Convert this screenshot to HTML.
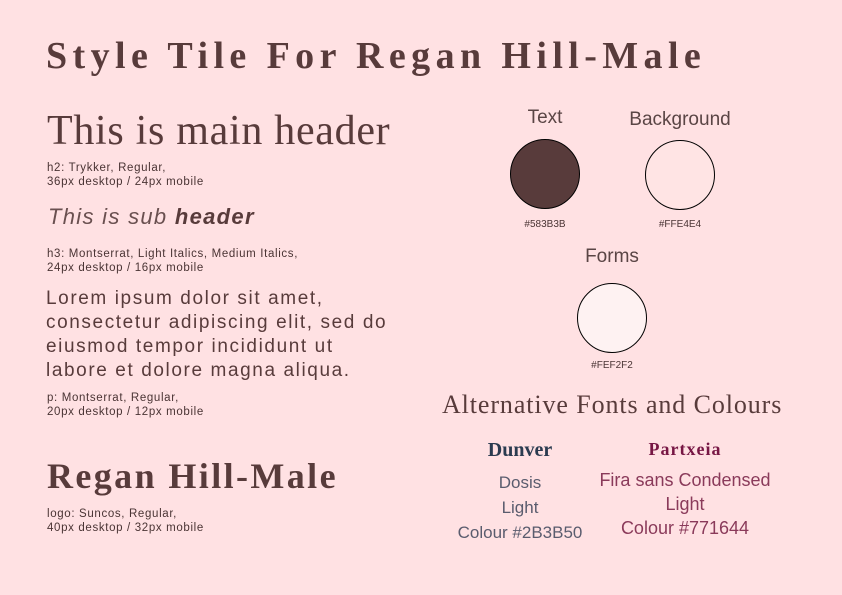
<!DOCTYPE html>
<html><head><meta charset="utf-8"><style>
body{margin:0;width:842px;height:595px;background:#ffe1e3;position:relative;overflow:hidden;font-family:"Liberation Sans",sans-serif;color:#583b3b}
.a{position:absolute;white-space:nowrap}
.s{font-size:11.5px;line-height:14px;color:#4a3434;letter-spacing:0.65px}
.c{position:absolute;width:68px;height:68px;border-radius:50%;border:1px solid #000}
.lab{font-size:19px;color:#5a4545;text-align:center}
.hex{font-size:10px;color:#4a3434;text-align:center}
</style></head><body>
<div class="a" style="left:46px;top:34px;font:bold 38px 'Liberation Serif',serif;letter-spacing:5.4px;color:#583b3b">Style Tile For Regan Hill-Male</div>
<div class="a" style="left:47px;top:107px;font:42px 'Liberation Serif',serif;letter-spacing:0.7px">This is main header</div>
<div class="a s" style="left:47px;top:161px">h2: Trykker, Regular,<br>36px desktop / 24px mobile</div>
<div class="a" style="left:48px;top:204px;font-size:22px;font-style:italic;color:#6a5050;letter-spacing:1.3px">This is sub <b style="color:#583b3b">header</b></div>
<div class="a s" style="left:47px;top:247px">h3: Montserrat, Light Italics, Medium Italics,<br>24px desktop / 16px mobile</div>
<div class="a" style="left:46px;top:287px;font-size:19px;line-height:24px;letter-spacing:1.6px">Lorem ipsum dolor sit amet,<br>consectetur adipiscing elit, sed do<br>eiusmod tempor incididunt ut<br>labore et dolore magna aliqua.</div>
<div class="a s" style="left:47px;top:391px">p: Montserrat, Regular,<br>20px desktop / 12px mobile</div>
<div class="a" style="left:47px;top:455px;font:bold 36px 'Liberation Serif',serif;letter-spacing:2.4px">Regan Hill-Male</div>
<div class="a s" style="left:47px;top:507px">logo: Suncos, Regular,<br>40px desktop / 32px mobile</div>

<div class="a lab" style="left:505px;top:107px;width:80px">Text</div>
<div class="a lab" style="left:610px;top:109px;width:140px">Background</div>
<div class="c" style="left:510px;top:139px;background:#583b3b"></div>
<div class="c" style="left:645px;top:140px;background:#ffe4e4"></div>
<div class="a hex" style="left:505px;top:219px;width:80px">#583B3B</div>
<div class="a hex" style="left:640px;top:219px;width:80px">#FFE4E4</div>
<div class="a lab" style="left:572px;top:246px;width:80px">Forms</div>
<div class="c" style="left:577px;top:283px;background:#fef2f2"></div>
<div class="a hex" style="left:572px;top:360px;width:80px">#FEF2F2</div>

<div class="a" style="left:442px;top:390px;font:26px 'Liberation Serif',serif;color:#583b3b;letter-spacing:0.9px">Alternative Fonts and Colours</div>
<div class="a" style="left:470px;top:439px;width:100px;text-align:center;font:bold 20px 'Liberation Serif',serif;color:#2b3b50">Dunver</div>
<div class="a" style="left:440px;top:470px;width:160px;text-align:center;font-size:17px;line-height:25px;color:#5a5c6e">Dosis<br>Light<br>Colour #2B3B50</div>
<div class="a" style="left:605px;top:439px;width:160px;text-align:center;font:bold 18px 'Liberation Serif',serif;letter-spacing:1px;color:#771644">Partxeia</div>
<div class="a" style="left:595px;top:468px;width:180px;text-align:center;font-size:18px;line-height:24px;color:#8a3a5a">Fira sans Condensed<br>Light<br>Colour #771644</div>
</body></html>
